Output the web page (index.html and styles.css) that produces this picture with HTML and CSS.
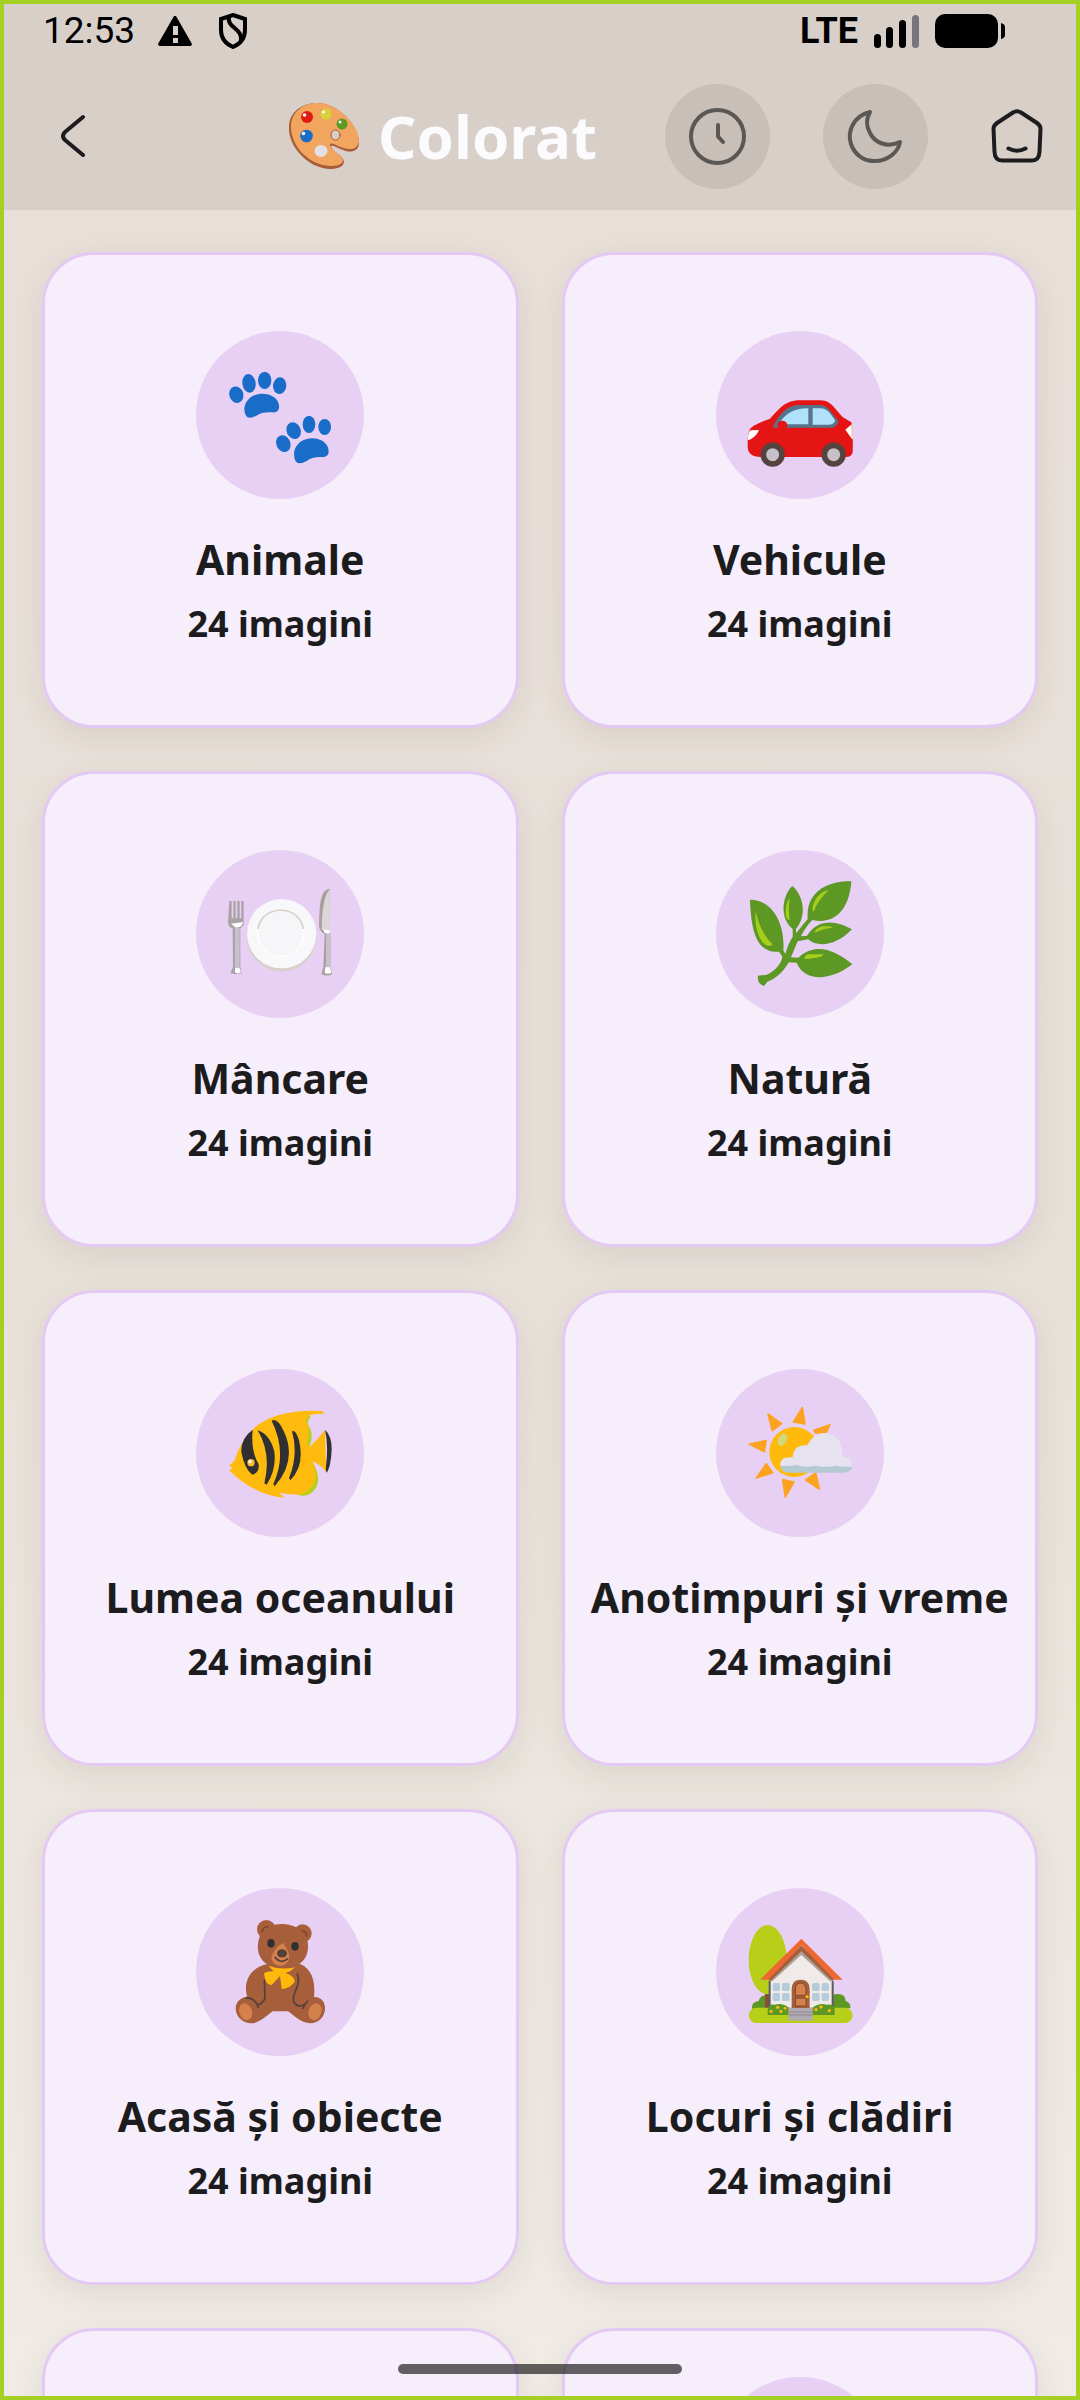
FILE: index.html
```html
<!DOCTYPE html>
<html lang="ro">
<head>
<meta charset="utf-8">
<meta name="viewport" content="width=device-width, initial-scale=1">
<title>Colorat</title>
<link rel="stylesheet" href="styles.css">
</head>
<body>
<div class="screen">
  <div class="top">
    <div class="status">
      <span class="time">12:53</span>
      <svg class="warn" viewBox="0 0 36 32" width="36" height="32"><path d="M17 1h2l16 28q0 2-2 2H3q-2 0-2-2z"/><path class="cut" d="M16 11h5v9h-5zM16 23h5v5h-5z"/></svg>
      <svg class="shield" viewBox="0 0 30 36" width="30" height="36"><path d="M15 2L27 6V17C27 25 22 31 15 34C8 31 3 25 3 17V6Z"/><path d="M11 3C8 15 25 15 23 28"/></svg>
      <span class="net">LTE</span>
      <svg class="signal" viewBox="0 0 46 33" width="46" height="33"><rect x="0" y="19" width="7" height="14" rx="3.500"/><rect x="12" y="12" width="7" height="21" rx="3.500"/><rect x="25" y="5" width="7" height="28" rx="3.500"/><rect class="dim" x="38" y="0" width="7" height="33" rx="3.500"/></svg>
      <svg class="battery" viewBox="0 0 70 34" width="70" height="34"><rect width="63" height="34" rx="10"/><path d="M66 9q4 1 4 4v8q0 3-4 4z"/></svg>
    </div>
    <header class="bar">
      <button class="icon-btn back" aria-label="Înapoi"><svg viewBox="0 0 26 44" width="26" height="44"><path d="M23 3L5 18Q1 22 5 26L23 41"/></svg></button>
      <h1 class="title">
        <svg viewBox="0 0 71 66" width="71" height="66" aria-hidden="true">
          <path fill="#a85c38" d="M0 24C0 10 12 0 28 0C50 0 71 24 70 41C69 49 61 50 54 47C48 45 44 42 42 43C42 48 55 53 55 59C54 65 47 66 40 66C17 64-1 42 0 24Z"/>
          <path fill="#f2a55e" d="M2 22C3 9 14 0 28 0C50 0 71 24 70 39C68 47 61 47 55 45C48 43 43 39 41 41C40 47 54 52 54 58C53 62 47 63 41 63C19 62 1 42 2 22Z"/>
          <ellipse cx="46.500" cy="32" rx="4.500" ry="5" fill="#d9cfc9" stroke="#a85c38"/>
          <circle cx="18" cy="14" r="6" fill="#e01b14"/><circle cx="37" cy="11" r="5.500" fill="#d9d13c"/><circle cx="53" cy="21" r="5.500" fill="#5d9825"/><circle cx="17.500" cy="33" r="6.300" fill="#196cc8"/><ellipse cx="32" cy="48" rx="6.500" ry="6" fill="#e4e1e4"/>
          <g fill="#fff"><circle cx="15.500" cy="12" r="1.800"/><circle cx="34.500" cy="9" r="1.500"/><circle cx="51" cy="19" r="1.500"/><circle cx="14.500" cy="30.500" r="1.800"/></g>
        </svg>
        <span>Colorat</span>
      </h1>
      <button class="icon-btn round" aria-label="Istoric"><svg viewBox="0 0 105 105" width="105" height="105"><circle cx="52.500" cy="52.500" r="26.500"/><path d="M53 41V52.500L58 58"/></svg></button>
      <button class="icon-btn round" aria-label="Mod întunecat"><svg viewBox="0 0 105 105" width="105" height="105"><path d="M47 28C30 32 24 48 28 60C32 72 43 78 52 77C64 77 75 69 77 58C64 64 52 59 47 49C43 42 43 35 47 28Z"/></svg></button>
      <a class="home" href="#" aria-label="Acasă"><svg viewBox="0 0 52 54" width="52" height="54"><path d="M22 3.500Q26 1 30 3.500L46 14Q49.500 16.500 49.500 20L48.500 43Q48 51.500 41 51.500H11Q4 51.500 3.500 43L2.500 20Q2.500 16.500 6 14Z"/><path d="M17.500 39.500Q26 44 34.500 39.500"/></svg></a>
    </header>
  </div>

  <main class="grid">
    <a class="card" href="#">
      <span class="disc"><svg viewBox="49 60 504 504" fill="#196cc8"><g id="paw"><ellipse cx="170" cy="251" rx="21" ry="25" transform="rotate(-20 170 251)"/><ellipse cx="208" cy="217" rx="20" ry="28" transform="rotate(-8 208 217)"/><ellipse cx="255" cy="208" rx="20" ry="26"/><ellipse cx="300" cy="224" rx="20" ry="25" transform="rotate(5 300 224)"/><path d="M194 292C201 238 276 238 294 271C304 291 296 306 277 304Q247 302 230 314Q194 334 194 292Z"/></g><ellipse cx="311" cy="398" rx="21" ry="26" transform="rotate(-24 311 398)"/><ellipse cx="342" cy="359" rx="21" ry="26" transform="rotate(-24 342 359)"/><ellipse cx="388" cy="340" rx="19" ry="26"/><ellipse cx="435" cy="348" rx="19" ry="24"/><path d="M343 426C350 372 425 370 443 405C453 428 443 440 425 438Q397 437 381 450Q343 472 343 426Z"/></svg></span>
      <h2>Animale</h2><p>24 imagini</p>
    </a>
    <a class="card" href="#">
      <span class="disc"><svg viewBox="46 60 504 504"><path fill="#e51515" d="M141 388Q141 353 159 344Q178 334 208 323C232 300 248 268 298 268H358C393 267 407 301 427 319L452 334Q458 350 456 423Q454 438 435 438H180Q141 438 141 406Z"/><path fill="#57748a" d="M217 346Q246 287 289 282H358Q377 282 393 305L413 330Q410 350 390 350H222Z"/><path fill="#afe2fa" d="M235 339Q261 291 323 292V340H240ZM336 292H357Q377 292 388 307L403 327Q402 340 386 341H336Z"/><ellipse cx="245" cy="343" rx="15" ry="14" fill="#e51515"/><path fill="#fff" d="M150 358L175 357Q167 379 142 388Q141 365 150 358ZM453 340L434 356L454 384Z"/><path stroke="#e8d5bd" stroke-width="4" d="M455 340V384"/><g fill="#c8c0c8" stroke="#54433f" stroke-width="17"><circle cx="216" cy="431" r="28"/><circle cx="399" cy="431" r="28"/></g></svg></span>
      <h2>Vehicule</h2><p>24 imagini</p>
    </a>
    <a class="card" href="#">
      <span class="disc"><svg viewBox="49 57 504 504"><ellipse cx="306" cy="316" rx="105" ry="106" fill="#d8d0cc"/><circle cx="306" cy="308" r="104" fill="#f8f7fa"/><circle cx="303" cy="307" r="69" fill="#f6f5f8" stroke="#fff" stroke-width="4"/><path fill="none" stroke="#d8d0ca" stroke-width="5" d="M235 294C246 219 360 219 371 294"/><path fill="#aaa2a5" d="M149 211q4-3 7 0v51h5v-51q4-3 7 0v51h5v-51q4-3 7 0v51h5v-51q4-3 7 0v70L182 292V408L186 427Q169 432 152 427L160 407L159 292Q144 288 145 272Z"/><path fill="#c8c1cb" d="M166 290h14v120h-14z"/><path fill="#fff" d="M154 278l37-5-7 13-15 4zM166 410h13l5 14q-14 7-18-1z"/><path fill="#a8a09f" d="M450 173C423 177 420 212 418 286Q421 304 435 309L431 409L425 430Q441 437 457 430L452 406V307H448Z"/><path fill="#dcd7d7" d="M450 175Q427 200 426 296H450Z"/><path fill="#c8c1cb" d="M439 306h13v105h-13z"/><path fill="#fff" d="M431 295l19 2-2 11-14-3zM437 409h14l4 16q-12 6-20 0z"/></svg></span>
      <h2>Mâncare</h2><p>24 imagini</p>
    </a>
    <a class="card" href="#">
      <span class="disc"><svg viewBox="46 57 504 504"><g fill="#5d9825"><path d="M172 434Q184 432 196 432C224 420 242 398 245 377L235 362C169 370 151 299 148 206C209 205 254 269 248 358L254 369Q263 336 276 318V294C231 257 249 188 275 165C307 191 321 252 286 294V307L321 264C315 173 393 150 452 151C447 230 406 283 335 267Q312 291 301 316L319 314C355 258 412 271 454 295C407 345 350 350 322 325L291 331L271 379L293 380C342 334 401 354 455 400C383 455 309 449 288 395L265 394C246 424 224 445 200 452L190 465Q168 457 172 434Z"/></g><g fill="#a5ce1b"><path d="M165 240Q179 306 216 340Q204 352 185 333Q160 299 165 240ZM267 201Q262 232 267 266Q257 268 255 248Q255 215 267 201ZM384 177Q351 208 339 242Q329 237 344 206Q360 180 384 177ZM396 290Q371 292 342 305Q342 293 366 286Q391 284 396 290ZM368 370Q369 380 312 384Q308 378 321 370Z"/></g></svg></span>
      <h2>Natură</h2><p>24 imagini</p>
    </a>
    <a class="card" href="#">
      <span class="disc"><svg viewBox="49 54 504 504"><path fill="#b7cf19" d="M376 195L394 196Q376 214 393 235Q401 266 387 290L397 330Q435 393 395 426Q379 439 353 431Z"/><path fill="#ffbb0d" d="M148 342Q164 333 166 325Q181 274 220 234Q285 174 428 180L434 188L408 189Q377 192 379 212Q392 235 384 260Q380 281 390 287Q415 265 436 236L440 364Q421 340 398 331Q421 390 388 414Q375 440 299 425L315 440Q229 435 149 359L158 352Z"/><g fill="#303033"><path d="M219 236Q213 300 237 340Q240 365 218 371Q195 356 185 303Q183 262 219 236ZM234 238Q271 250 284 302Q291 354 261 401L254 397Q276 308 234 238ZM276 209Q293 199 312 240Q354 328 285 406L281 399Q324 307 276 209ZM337 241Q348 235 358 268Q376 343 332 388L328 381Q357 311 337 241ZM436 236Q467 264 450 345L442 365Q436 363 440 335Q446 277 436 236Z"/></g><circle cx="214" cy="335" r="11" fill="#ffb931"/><circle cx="211" cy="332" r="5" fill="#fff"/></svg></span>
      <h2>Lumea oceanului</h2><p>24 imagini</p>
    </a>
    <a class="card" href="#">
      <span class="disc"><svg viewBox="46 54 504 504"><path fill="#fca321" stroke="#fca321" stroke-width="5" stroke-linejoin="round" d="M202 189L243 218L215 239ZM305 170L313 219L278 213ZM388 221L340 238L344 246L376 246ZM146 279L196 269L191 302ZM167 381L197 338L216 365ZM246 386L280 393L254 438ZM315 387L345 366L356 414Z"/><circle cx="281" cy="303" r="75" fill="#ffb90b"/><ellipse cx="245" cy="266" rx="13" ry="20" transform="rotate(27 245 266)" fill="#d2d779"/><path fill="#b5c9d2" d="M239 340H456Q454 365 430 365H260Q239 365 239 340Z"/><path fill="#e6e2ef" d="M238 344Q238 315 276 319Q278 280 320 283Q337 245 374 246Q425 251 425 316Q456 319 456 347Q431 349 407 344Q377 351 346 344Q314 351 286 342Q261 347 238 344Z"/></svg></span>
      <h2>Anotimpuri și vreme</h2><p>24 imagini</p>
    </a>
    <a class="card" href="#">
      <span class="disc"><svg viewBox="49 51 504 504"><g fill="#a65e3b"><circle cx="260" cy="175" r="28"/><circle cx="369" cy="187" r="27"/><path d="M240 197C251 146 366 143 383 207C394 261 360 294 309 291C249 292 222 248 240 197Z"/><path d="M263 279H362C402 297 407 341 403 378C446 377 446 438 410 453C374 469 341 431 325 421H279C254 439 230 466 198 454C158 437 157 383 202 377C192 338 204 292 263 279Z"/></g><g fill="#d5814e"><ellipse cx="198" cy="422" rx="19" ry="26" transform="rotate(-20 198 422)"/><ellipse cx="406" cy="422" rx="19" ry="26" transform="rotate(20 406 422)"/><path d="M311 216Q321 229 329 251Q331 280 304 284Q275 282 275 257Q291 223 311 216Z"/></g><g fill="#303033"><ellipse cx="274" cy="217" rx="11" ry="13"/><ellipse cx="346" cy="226" rx="11" ry="13"/></g><ellipse cx="307" cy="247" rx="15" ry="12" fill="#54403b"/><g fill="none" stroke="#54403b" stroke-width="5"><path d="M285 258Q303 281 325 263M254 326L256 382Q249 398 233 402L236 412M197 381Q220 378 235 404M352 307Q363 329 346 362Q333 398 355 404Q375 407 385 389M369 414L376 399"/><path stroke="#80452f" d="M247 185Q248 166 266 167M381 197Q383 181 366 180"/></g><path fill="#ffb90b" d="M266 284Q302 298 346 289Q331 304 317 306Q344 313 345 333Q329 353 306 354L301 315L276 342Q256 343 253 306Q263 300 282 301Z"/></svg></span>
      <h2>Acasă și obiecte</h2><p>24 imagini</p>
    </a>
    <a class="card" href="#">
      <span class="disc"><svg viewBox="46 51 504 504"><path fill="#5d9825" d="M154 413Q152 393 174 390Q180 370 204 371H395Q434 362 435 390Q451 395 449 412Z"/><path fill="#8c4c3a" d="M193 357h17v57h-17z"/><ellipse cx="201" cy="266" rx="57" ry="104" fill="#b7cf19"/><rect x="144" y="410" width="312" height="46" rx="23" fill="#b7cf19"/><path fill="#5c5a63" d="M204 330h195v80H204z"/><path fill="#f0ebe8" d="M210 410V320L302 235L393 320V410Z"/><path fill="none" stroke="#a9a198" stroke-width="14" d="M209 326L302 242L394 326"/><path fill="none" stroke="#a65e3b" stroke-width="12" d="M205 326L302 232L399 326"/><path fill="#ee6932" d="M302 203L426 326H401L302 223L203 326H178Z"/><g fill="#b3ccd7"><rect x="216" y="336" width="22" height="24" rx="5"/><rect x="244" y="336" width="23" height="24" rx="5"/><rect x="216" y="366" width="22" height="24" rx="5"/><rect x="244" y="366" width="23" height="24" rx="5"/><rect x="334" y="336" width="23" height="24" rx="5"/><rect x="363" y="336" width="22" height="24" rx="5"/><rect x="334" y="366" width="23" height="24" rx="5"/><rect x="363" y="366" width="22" height="24" rx="5"/></g><path fill="#a65e3b" d="M273 411V353Q274 326 300 326T327 353V411Z"/><path fill="#d5814e" stroke="#80452f" stroke-width="3" d="M284 373V354Q286 336 300 336T316 354V373ZM284 381H316V405H284Z"/><circle cx="319" cy="377" r="5" fill="#ffb90b"/><path fill="#5d9825" d="M201 432V415Q204 398 222 401Q247 394 264 410V432ZM336 432V410Q355 395 377 401Q401 398 402 416V432Z"/><g fill="#ffb90b"><circle cx="211" cy="421" r="5"/><circle cx="231" cy="409" r="5"/><circle cx="241" cy="421" r="5"/><circle cx="253" cy="412" r="4"/><circle cx="346" cy="416" r="5"/><circle cx="361" cy="408" r="5"/><circle cx="386" cy="419" r="5"/></g><path fill="#b3abb4" d="M264 411h72v38h-72z"/><path fill="none" stroke="#8c848e" stroke-width="3" d="M264 423h72M264 432h72"/></svg></span>
      <h2>Locuri și clădiri</h2><p>24 imagini</p>
    </a>
    <a class="card" href="#" aria-label="Categorie"></a>
    <a class="card tall" href="#" aria-label="Categorie"><span class="disc"></span></a>
  </main>
  <div class="gesture"></div>
</div>
</body>
</html>
```
FILE: styles.css
```css
* { box-sizing: border-box; }
body { margin: 0; font-family: "Noto Sans", sans-serif; color: #1c1c1e; }
svg { display: block; flex: none; }
h1, h2, p { margin: 0; }

.screen {
  position: relative;
  height: 100vh;
  overflow: hidden;
  display: flex;
  flex-direction: column;
  border: 4px solid #a4d024;
  background: linear-gradient(#e8dfd9, #e8e1da 55%, #f0ebe5);
}

.top { flex: none; background: #d9cfc9; }
.status {
  display: flex;
  align-items: center;
  height: 54px;
  padding: 0 71px 0 39px;
}
.time { font: 37px/44px Roboto, sans-serif; color: #000; }
.warn { margin-left: 22px; }
.warn .cut { fill: #d9cfc9; }
.shield { margin-left: 25px; fill: none; stroke: #000; stroke-width: 4px; }
.net {
  margin-left: auto;
  font: bold 36px/44px Roboto, sans-serif;
  color: #000;
}
.signal { margin-left: 16px; }
.signal .dim { fill: #7a757c; }
.battery { margin-left: 15px; }

.bar {
  display: flex;
  align-items: center;
  height: 152px;
  padding: 4px 33px 0 40px;
}
.bar svg { stroke-linecap: round; stroke-linejoin: round; }
.icon-btn {
  flex: none;
  padding: 0;
  border: 0;
  background: none;
}
.icon-btn svg, .home svg { fill: none; stroke: #1c1c1e; stroke-width: 4px; }
.back { padding: 0 16px; }
.round {
  border-radius: 50%;
  background: #c8bfb8;
}
.round + .round { margin-left: 53px; }
.round svg { stroke: #5b5755; }
.home { margin-left: 63px; }
.title {
  flex: 1;
  display: flex;
  justify-content: flex-end;
  align-items: center;
  gap: 18px;
  margin-right: 68px;
  font-size: 60px;
  line-height: 86px;
  font-weight: 700;
  color: #fbfbfd;
}

.grid {
  flex: 1;
  display: grid;
  grid-template-columns: 1fr 1fr;
  grid-auto-rows: 476px;
  gap: 43px;
  padding: 42px 38px;
  overflow: hidden;
}
.card {
  display: flex;
  flex-direction: column;
  align-items: center;
  justify-content: center;
  border: 3px solid #e5c9f5;
  border-radius: 52px;
  background: #f6eefb;
  box-shadow: 0 10px 32px rgba(70, 60, 30, 0.09);
  color: inherit;
  text-align: center;
  text-decoration: none;
}
.disc {
  width: 168px;
  height: 168px;
  border-radius: 50%;
  background: #e8d0f5;
}
.disc svg { width: 100%; height: 100%; }
.card h2 {
  margin-top: 32px;
  font-size: 41px;
  line-height: 56px;
  font-weight: 700;
}
.card p {
  margin-top: 12px;
  font-size: 36px;
  line-height: 50px;
  font-weight: 700;
}
.tall { justify-content: flex-start; padding-top: 46px; }

.gesture {
  position: absolute;
  left: 50%;
  bottom: 22px;
  width: 284px;
  height: 10px;
  margin-left: -142px;
  border-radius: 5px;
  background: rgba(0, 0, 0, 0.6);
}
```
